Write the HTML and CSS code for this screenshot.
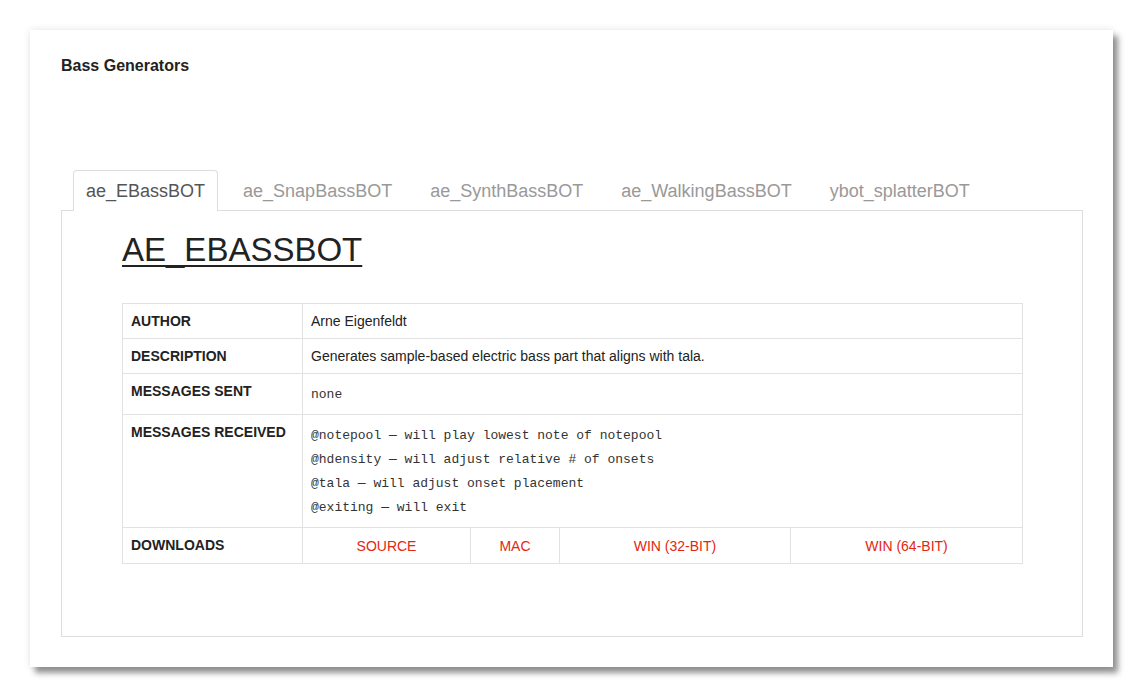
FILE: index.html
```html
<!DOCTYPE html>
<html>
<head>
<meta charset="utf-8">
<title>Bass Generators</title>
<link rel="stylesheet" href="styles.css">
</head>
<body>
<div class="card">
  <h3 class="page-title">Bass Generators</h3>
  <ul class="tabs">
    <li class="tab active">ae_EBassBOT</li>
    <li class="tab">ae_SnapBassBOT</li>
    <li class="tab">ae_SynthBassBOT</li>
    <li class="tab">ae_WalkingBassBOT</li>
    <li class="tab">ybot_splatterBOT</li>
  </ul>
  <div class="panel">
    <h1 class="bot-title">AE_EBASSBOT</h1>
    <table class="info">
      <colgroup>
        <col class="c-label">
        <col class="c-src">
        <col class="c-mac">
        <col class="c-w32">
        <col class="c-w64">
      </colgroup>
      <tr>
        <th>AUTHOR</th>
        <td colspan="4">Arne Eigenfeldt</td>
      </tr>
      <tr>
        <th>DESCRIPTION</th>
        <td colspan="4">Generates sample-based electric bass part that aligns with tala.</td>
      </tr>
      <tr>
        <th>MESSAGES SENT</th>
        <td colspan="4" class="mono">none</td>
      </tr>
      <tr>
        <th>MESSAGES RECEIVED</th>
        <td colspan="4" class="mono">@notepool — will play lowest note of notepool<br>@hdensity — will adjust relative # of onsets<br>@tala — will adjust onset placement<br>@exiting — will exit</td>
      </tr>
      <tr>
        <th class="dl-label">DOWNLOADS</th>
        <td class="dl"><a href="#">SOURCE</a></td>
        <td class="dl"><a href="#">MAC</a></td>
        <td class="dl"><a href="#">WIN (32-BIT)</a></td>
        <td class="dl"><a href="#">WIN (64-BIT)</a></td>
      </tr>
    </table>
  </div>
</div>
</body>
</html>
```

FILE: styles.css
```css
html, body {
  margin: 0;
  padding: 0;
  background: #ffffff;
}
body {
  padding: 30px;
  font-family: "Liberation Sans", Arial, Helvetica, sans-serif;
  color: #333;
  width: 1083px;
}
.card {
  background: #fff;
  width: 1083px;
  box-sizing: border-box;
  padding: 26px 30px 30px 31px;
  box-shadow: 5px 6px 6px rgba(0,0,0,0.42), 0 0 8px rgba(0,0,0,0.10);
}
.page-title {
  margin: 0 0 94px 0;
  font-size: 16px;
  line-height: 20px;
  font-weight: bold;
  color: #222;
}
.tabs {
  list-style: none;
  margin: 0 0 -1px 0;
  padding: 0 0 0 12px;
  display: flex;
  position: relative;
  z-index: 1;
}
.tab {
  font-size: 18px;
  line-height: 20px;
  padding: 10px 12px;
  border: 1px solid transparent;
  border-bottom: none;
  border-radius: 4px 4px 0 0;
  margin-right: 12px;
  color: #999;
}
.tab.active {
  color: #555;
  background: #fff;
  border-color: #ddd;
}
.panel {
  border: 1px solid #ddd;
  padding: 21px 60px 72px 60px;
}
.bot-title {
  margin: 0 0 35px 0;
  font-size: 33px;
  line-height: 36px;
  font-weight: normal;
  color: #222;
  text-decoration: underline;
  text-decoration-thickness: 2px;
  text-underline-offset: 4px;
}
.info {
  border-collapse: collapse;
  table-layout: fixed;
  width: 900px;
  font-size: 14px;
  line-height: 18px;
}
.c-label { width: 180px; }
.c-src { width: 168px; }
.c-mac { width: 89px; }
.c-w32 { width: 231px; }
.c-w64 { width: 232px; }
.info th, .info td {
  border: 1px solid #e2e2e2;
  padding: 8px 8px;
  vertical-align: top;
  text-align: left;
}
.info th {
  font-weight: bold;
  color: #222;
}
.info td {
  color: #222;
}
.info td.mono {
  font-family: "Liberation Mono", "Courier New", monospace;
  font-size: 13px;
  line-height: 24px;
  color: #333;
  padding-top: 9px;
  padding-bottom: 7px;
}
.info th.dl-label {
  padding-top: 8px;
  padding-bottom: 8px;
}
.info td.dl {
  text-align: center;
  padding-top: 9px;
  padding-bottom: 8px;
  vertical-align: middle;
}
.dl a {
  color: #e5260f;
  text-decoration: none;
}
```
